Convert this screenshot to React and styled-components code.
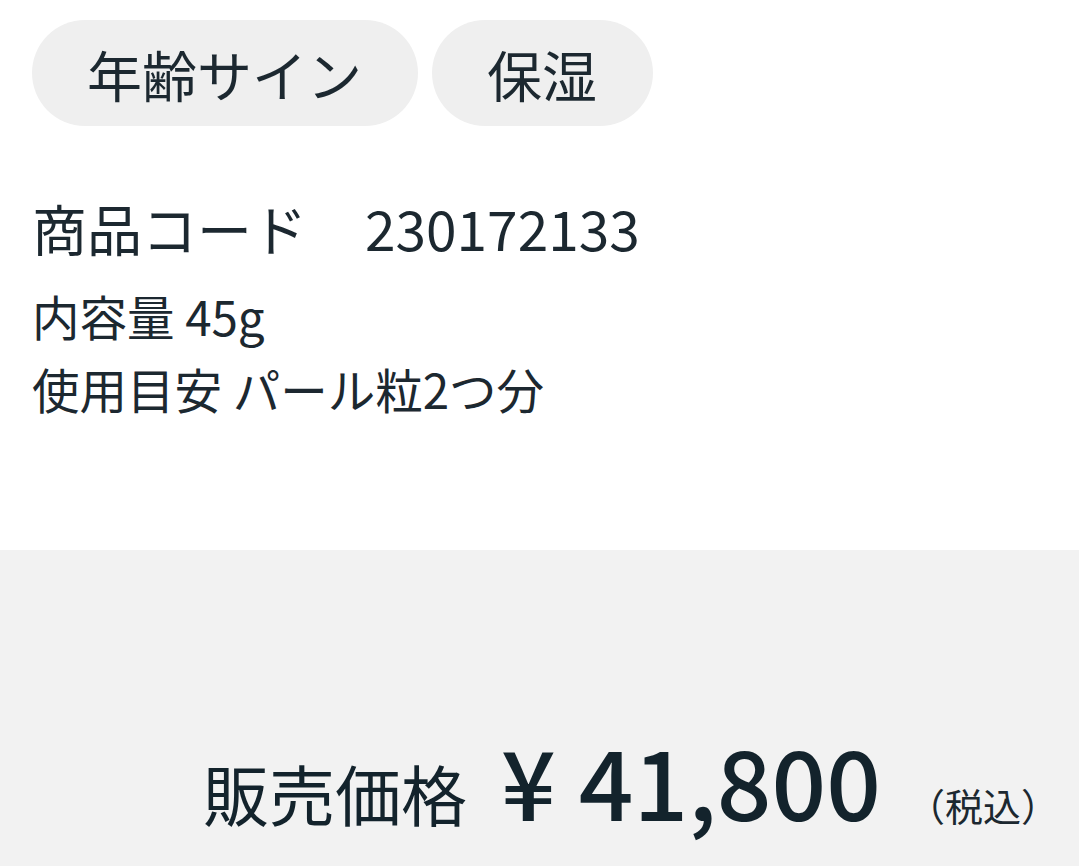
import React from "react";
import styled, { createGlobalStyle } from "styled-components";

const Global = createGlobalStyle`
  html, body { margin: 0; padding: 0; background: #ffffff; }
  body { font-family: "Noto Sans CJK JP", "Noto Sans", sans-serif; color: #1c2830; }
`;

const Page = styled.div`
  width: 1079px;
  min-height: 866px;
  display: flex;
  flex-direction: column;
  overflow: hidden;
`;

const Info = styled.section`
  background: #ffffff;
  height: 550px;
  box-sizing: border-box;
  padding: 20px 0 0 32px;
`;

const Tags = styled.div`
  display: flex;
  gap: 14px;
`;

const Tag = styled.span`
  display: inline-flex;
  align-items: center;
  height: 106px;
  padding: 0 56px 0 55px;
  border-radius: 53px;
  background: #efefef;
  font-size: 55px;
  line-height: 1;
  color: #1c2830;
`;

const Specs = styled.div`
  margin-top: 61px;
  display: flex;
  flex-direction: column;
`;

const CodeLine = styled.div`
  font-size: 55px;
  line-height: 80px;
  display: flex;
`;

const CodeValue = styled.span`
  margin-left: 58px;
`;

const SpecLine = styled.div`
  font-size: 47.5px;
  line-height: 73px;
  margin-top: ${(p) => (p.$first ? "12px" : "0")};
`;

const PriceArea = styled.section`
  flex: 1;
  background: #f2f2f2;
  display: flex;
  justify-content: flex-end;
  align-items: flex-end;
  padding: 0 20px 17px 0;
  height: 316px;
  box-sizing: border-box;
`;

const PriceRow = styled.div`
  display: flex;
  align-items: baseline;
  color: #13232c;
`;

const PriceLabel = styled.span`
  font-size: 66px;
  margin-right: 34px;
`;

const Yen = styled.span`
  font-size: 96px;
  font-weight: 500;
  margin-right: 23px;
`;

const Amount = styled.span`
  font-size: 96px;
  font-weight: 500;
`;

const Tax = styled.span`
  font-size: 38px;
  margin-left: 26px;
  color: #1c2830;
`;

export default function App() {
  return (
    <>
      <Global />
      <Page>
        <Info>
          <Tags>
            <Tag>年齢サイン</Tag>
            <Tag>保湿</Tag>
          </Tags>
          <Specs>
            <CodeLine>
              <span>商品コード</span>
              <CodeValue>230172133</CodeValue>
            </CodeLine>
            <SpecLine $first>内容量 45g</SpecLine>
            <SpecLine>使用目安 パール粒2つ分</SpecLine>
          </Specs>
        </Info>
        <PriceArea>
          <PriceRow>
            <PriceLabel>販売価格</PriceLabel>
            <Yen>¥</Yen>
            <Amount>41,800</Amount>
            <Tax>（税込）</Tax>
          </PriceRow>
        </PriceArea>
      </Page>
    </>
  );
}
